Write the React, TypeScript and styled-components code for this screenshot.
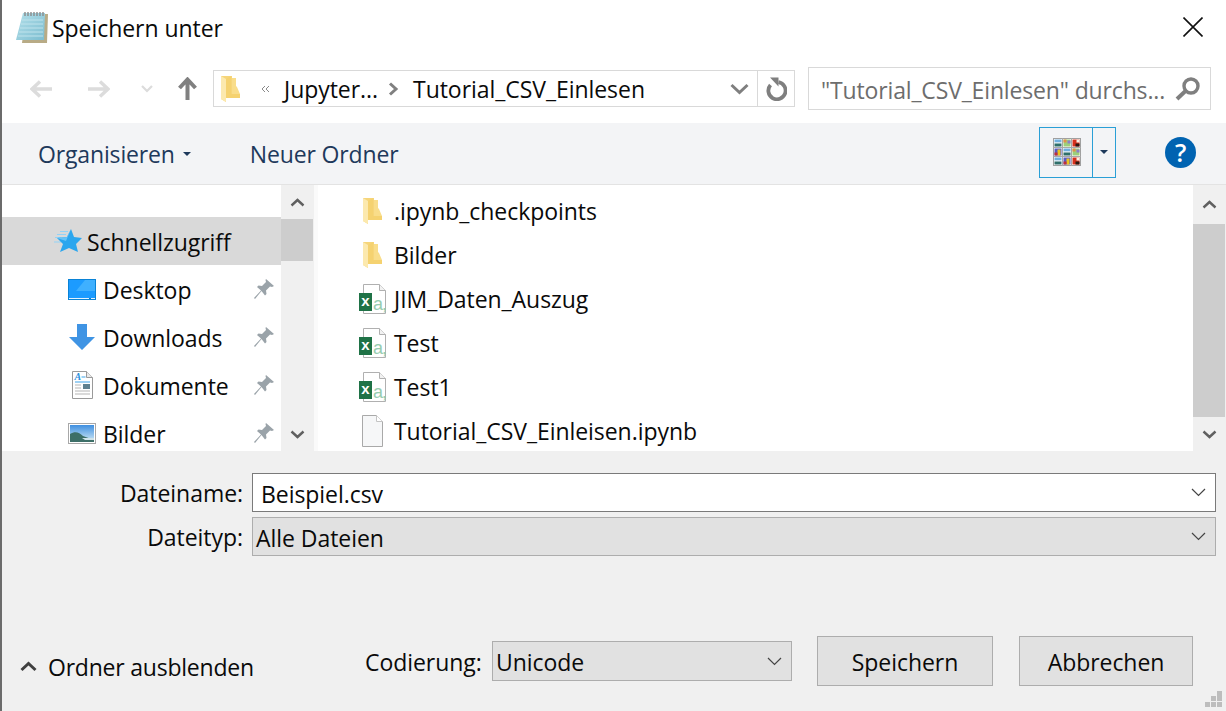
import React from 'react';
import styled, {createGlobalStyle} from 'styled-components';

const GlobalStyle = createGlobalStyle`
    html, body {
        margin: 0;
        padding: 0;
        background: #ffffff;
    }
    * {
        box-sizing: border-box;
    }
`;

const FONT = '"Open Sans", "Noto Sans", sans-serif';

const DialogDiv = styled.div`
    position: relative;
    width: 1226px;
    height: 711px;
    display: flex;
    flex-direction: column;
    overflow: hidden;
    border-left: 2px solid #6b6b6b;
    font-family: ${FONT};
    font-size: 23px;
    letter-spacing: -0.05px;
    color: #0a0a0a;
    background: #ffffff;
`;

const TitleBar = styled.div`
    height: 58px;
    flex: none;
    display: flex;
    align-items: center;
    padding: 0 23px 4px 14px;
`;

const TitleText = styled.span`
    flex: 1;
    margin-left: 4px;
    padding-top: 2px;
`;

const NavBar = styled.div`
    height: 65px;
    flex: none;
    display: flex;
    align-items: center;
    padding-left: 28px;
    padding-bottom: 4px;
`;

const NavButton = styled.div<{$width: number}>`
    width: ${(p) => p.$width}px;
    flex: none;
    display: flex;
    align-items: center;
`;

const AddressBox = styled.div`
    width: 582px;
    height: 37px;
    margin-left: 16px;
    flex: none;
    display: flex;
    align-items: center;
    border: 1px solid #d9d9d9;
    padding-left: 7px;
`;

const Crumb = styled.span<{$left: number}>`
    margin-left: ${(p) => p.$left}px;
    white-space: nowrap;
    display: flex;
    align-items: center;
`;

const AddressEnd = styled.div`
    margin-left: auto;
    display: flex;
    align-items: center;
    height: 100%;
`;

const RefreshCell = styled.div`
    width: 37px;
    height: 100%;
    margin-left: 8px;
    border-left: 1px solid #d9d9d9;
    display: flex;
    align-items: center;
    justify-content: center;
`;

const SearchBox = styled.div`
    width: 403px;
    height: 43px;
    margin-left: 13px;
    flex: none;
    display: flex;
    align-items: center;
    justify-content: space-between;
    border: 1px solid #d9d9d9;
    padding: 0 10px 0 12px;
    color: #6d6d6d;
`;

const SearchText = styled.span`
    padding-top: 2px;
    letter-spacing: -0.15px;
    white-space: nowrap;
`;

const ToolBar = styled.div`
    height: 62px;
    flex: none;
    display: flex;
    align-items: center;
    background: #f3f4f6;
    border-bottom: 1px solid #e3e3e3;
    padding: 0 30px 3px 36px;
    color: #1e395b;
    letter-spacing: -0.15px;
`;

const ToolItem = styled.div<{$left?: number}>`
    display: flex;
    align-items: center;
    gap: 8px;
    padding-top: 3px;
    margin-left: ${(p) => p.$left || 0}px;
`;

const ViewButton = styled.div`
    width: 77px;
    height: 51px;
    margin-left: auto;
    display: flex;
    border: 1px solid #2a9fd6;
`;

const ViewMain = styled.div`
    width: 53px;
    display: flex;
    align-items: center;
    justify-content: center;
    padding-left: 2px;
    border-right: 1px solid #2a9fd6;
`;

const ViewArrow = styled.div`
    flex: 1;
    display: flex;
    align-items: center;
    justify-content: center;
`;

const HelpCircle = styled.div`
    width: 31px;
    height: 31px;
    margin-left: 49px;
    border-radius: 50%;
    background: #0063b1;
    color: #ffffff;
    font-size: 25px;
    font-weight: 600;
    line-height: 30px;
    text-align: center;
`;

const ContentArea = styled.div`
    height: 266px;
    flex: none;
    display: flex;
    background: #ffffff;
`;

const NavPane = styled.div`
    width: 279px;
    flex: none;
    overflow: hidden;
    padding-top: 32px;
`;

const NavRow = styled.div<{$selected?: boolean; $indent: number}>`
    height: 48px;
    flex: none;
    display: flex;
    align-items: center;
    padding-left: ${(p) => p.$indent}px;
    padding-right: 7px;
    background: ${(p) => (p.$selected ? '#d9d9d9' : 'transparent')};
`;

const NavIconSlot = styled.div<{$width: number}>`
    width: ${(p) => p.$width}px;
    flex: none;
    display: flex;
    align-items: center;
`;

const NavIconCenter = styled(NavIconSlot)`
    justify-content: center;
    padding-right: 7px;
`;

const NavLabel = styled.span`
    flex: 1;
    padding-top: 2px;
`;

const ScrollTrack = styled.div<{$width: number}>`
    width: ${(p) => p.$width}px;
    flex: none;
    display: flex;
    flex-direction: column;
    background: #f0f0f0;
`;

const ScrollArrow = styled.div<{$height: number}>`
    height: ${(p) => p.$height}px;
    flex: none;
    display: flex;
    align-items: center;
    justify-content: center;
    padding-right: 1px;
`;

const ScrollThumb = styled.div<{$height: number}>`
    height: ${(p) => p.$height}px;
    flex: none;
    margin-right: 1px;
    background: #cdcdcd;
`;

const ScrollGap = styled.div`
    flex: 1;
`;

const Splitter = styled.div`
    width: 4px;
    flex: none;
    background: #fafafa;
`;

const FileList = styled.div`
    flex: 1;
    padding-top: 4px;
    overflow: hidden;
`;

const FileRow = styled.div`
    height: 44px;
    display: flex;
    align-items: center;
`;

const FileIconSlot = styled.div`
    width: 76px;
    flex: none;
    display: flex;
    justify-content: center;
    padding: 0 8px 0 41px;
`;

const Footer = styled.div`
    flex: 1;
    display: flex;
    flex-direction: column;
    background: #f0f0f0;
    padding-top: 22px;
`;

const FieldGrid = styled.div`
    display: grid;
    grid-template-columns: 241px 964px;
    grid-auto-rows: 39px;
    column-gap: 9px;
    row-gap: 5px;
`;

const FieldLabel = styled.div`
    text-align: right;
    height: 39px;
    line-height: 41px;
`;

const ComboText = styled.span`
    padding-top: 2px;
`;

const ComboBox = styled.div<{$light?: boolean}>`
    height: 39px;
    display: flex;
    align-items: center;
    justify-content: space-between;
    padding: 0 9px 0 ${(p) => (p.$light ? 8 : 3)}px;
    background: ${(p) => (p.$light ? '#ffffff' : '#e1e1e1')};
    border: 1px solid ${(p) => (p.$light ? '#7a7a7a' : '#adadad')};
`;

const BottomRow = styled.div`
    display: flex;
    align-items: center;
    margin-top: 80px;
    height: 50px;
`;

const HideFolders = styled.div`
    width: 363px;
    flex: none;
    display: flex;
    align-items: center;
    gap: 11px;
    padding-left: 18px;
    padding-top: 11px;
    letter-spacing: -0.22px;
`;

const EncodingLabel = styled.span`
    width: 127px;
    flex: none;
    padding-top: 1px;
`;

const EncodingBox = styled(ComboBox)`
    width: 300px;
    height: 40px;
    flex: none;
`;

const ActionButton = styled.div<{$left: number; $width: number}>`
    width: ${(p) => p.$width}px;
    height: 50px;
    margin-left: ${(p) => p.$left}px;
    padding-top: 2px;
    flex: none;
    display: flex;
    align-items: center;
    justify-content: center;
    background: #e1e1e1;
    border: 1px solid #adadad;
`;

const ResizeGrip = styled.svg`
    position: absolute;
    right: 4px;
    bottom: 4px;
`;

const ExcelSvg = styled.svg`
    margin-right: -4px;
`;

const ChevronThin = () => (
    <svg width="15" height="9" viewBox="0 0 15 9">
        <path d="M1 1l6.5 6.5L14 1" fill="none" stroke="#444" strokeWidth="1.2" />
    </svg>
);

const ChevronBold = ({up}: {up?: boolean}) => (
    <svg width="15" height="9" viewBox="0 0 15 9">
        <path d={up ? 'M1.5 7.5l6-5.5 6 5.5' : 'M1.5 1.5l6 5.5 6-5.5'} fill="none" stroke="#606060" strokeWidth="2.4" />
    </svg>
);

const HideChevron = () => (
    <svg width="17" height="11" viewBox="0 0 17 11">
        <path d="M1.500 9L8.500 2.500 15.500 9" fill="none" stroke="#404040" strokeWidth="3" />
    </svg>
);

const Arrow = ({flip}: {flip?: boolean}) => (
    <svg width="22" height="18" viewBox="0 0 22 18" style={flip ? {transform: 'scaleX(-1)'} : undefined}>
        <path d="M10 1.5L2 9l8 7.5M2.5 9H22" fill="none" stroke="#dcdcdc" strokeWidth="3.4" />
    </svg>
);

const UpArrow = () => (
    <svg width="19" height="23" viewBox="0 0 19 23">
        <path d="M9.5 23V3M1.5 11L9.5 2.5l8 8.5" fill="none" stroke="#808080" strokeWidth="4" />
    </svg>
);

const Folder = () => (
    <svg width="19" height="26" viewBox="0 0 19 26">
        <path d="M0 0h11v18h8v4H5v4L0 23z" fill="#f6d57a" />
        <path d="M11 2v16h8l-3-7-1-1V2z" fill="#f9dd8a" />
        <path d="M0 0l5 3v23L0 23z" fill="#fce9ae" />
        <path d="M5 3l5-3v18h9v4H5z" fill="#f5d270" />
    </svg>
);

const NotepadIcon = () => (
    <svg width="32" height="33" viewBox="0 0 32 33">
        <defs>
            <linearGradient id="padFill" x1="0" y1="0" x2="1" y2="1">
                <stop offset="0" stopColor="#b4e0ea" />
                <stop offset="1" stopColor="#7cbdd0" />
            </linearGradient>
        </defs>
        <path d="M10 3h22l-1 29H6z" fill="#b8ab86" />
        <path d="M7 2h22l-1 27H0z" fill="url(#padFill)" />
        <path d="M6 9h21M5 13h22M4 17h23M3 21h24M2 25h25" stroke="#bfe3ec" strokeWidth="1" />
        <path d="M9 1v4M12 1v4M15 1v4M18 1v4M21 1v4M24 1v4M27 1v4" stroke="#8a8a8a" strokeWidth="1.4" />
    </svg>
);

const CloseIcon = () => (
    <svg width="20" height="20" viewBox="0 0 20 20">
        <path d="M0.5 0.5l19 19M19.5 0.5l-19 19" stroke="#111" strokeWidth="1.6" />
    </svg>
);

const RefreshIcon = () => (
    <svg width="22" height="24" viewBox="0 0 22 24">
        <path d="M5.500 8a8.600 8.600 0 1 0 8-2.800" fill="none" stroke="#7f7f7f" strokeWidth="3.8" />
        <path d="M5 0.500h8.500v9z" fill="#7f7f7f" />
    </svg>
);

const SearchIcon = () => (
    <svg width="25" height="24" viewBox="0 0 25 24">
        <circle cx="16" cy="9" r="7" fill="none" stroke="#7f7f7f" strokeWidth="3.4" />
        <path d="M10.5 14L2 22" stroke="#7f7f7f" strokeWidth="4" />
    </svg>
);

const SmallCaret = ({color}: {color: string}) => (
    <svg width="8" height="4" viewBox="0 0 8 4">
        <path d="M0 0h8L4 4z" fill={color} />
    </svg>
);

// tiny pictures inside the thumbnail view icon
const Tile = ({kind, x, y}: {kind: number; x: number; y: number}) => {
    if (kind === 0) {
        return (
            <g transform={`translate(${x} ${y})`}>
                <rect width="7" height="3" fill="#6fb0e0" />
                <rect y="3" width="7" height="1" fill="#dfeef5" />
                <rect y="4" width="7" height="3" fill="#2f6f6a" />
            </g>
        );
    }
    if (kind === 1) {
        return (
            <g transform={`translate(${x} ${y})`}>
                <rect width="7" height="7" fill="#9ccf7a" />
                <rect width="3" height="3" fill="#e2904a" />
                <rect x="4" y="1" width="3" height="3" fill="#8f7fc8" />
            </g>
        );
    }
    if (kind === 2) {
        return (
            <g transform={`translate(${x} ${y})`}>
                <rect width="7" height="7" fill="#d6301c" />
                <rect x="4" y="0" width="3" height="3" fill="#f6f1e6" />
                <rect x="3" y="4" width="4" height="3" fill="#2a1a14" />
            </g>
        );
    }
    return (
        <g transform={`translate(${x} ${y})`}>
            <rect width="7" height="7" fill="#5a5ac0" />
            <rect x="3" y="1" width="3" height="6" fill="#eac51f" />
            <rect y="4" width="3" height="3" fill="#c0303a" />
        </g>
    );
};

const viewTiles = [0, 1, 2, 3, 0, 1, 0, 3, 2];

const ViewIcon = () => (
    <svg width="28" height="28" viewBox="0 0 28 28">
        <rect x="0.5" y="0.5" width="27" height="27" fill="#fff" stroke="#a0a0a0" />
        {viewTiles.map((tile, i) => (
            <Tile key={i} kind={tile} x={1.5 + (i % 3) * 9} y={1.5 + Math.floor(i / 3) * 9} />
        ))}
        <path d="M9.500 0v28M18.500 0v28M0 9.500h28M0 18.500h28" stroke="#a8a8a8" strokeWidth="1" />
    </svg>
);

const StarIcon = () => (
    <svg width="28" height="24" viewBox="0 0 28 24">
        <path d="M6 2.500h8M3 5.500h9M1 8.500h6M0 13h7" stroke="#93d3f6" strokeWidth="1" />
        <path d="M17 0l3 8 8 1-6 6 2 8-9-4-9 4 3-8-6-6 10-1z" fill="#2ba6ee" />
        <path d="M17 0l-4 8-10 1 9 3z" fill="#66c3f6" />
    </svg>
);

const DesktopIcon = () => (
    <svg width="28" height="21" viewBox="0 0 28 21">
        <rect width="28" height="21" fill="#0a83d6" />
        <rect x="1" y="1" width="26" height="18" fill="#1c9bff" />
        <path d="M17 1h10v11H8z" fill="#3fb0ff" />
        <path d="M1 19.500h20M23 19.500h4" stroke="#e6f4ff" strokeWidth="1" />
    </svg>
);

const DownloadIcon = () => (
    <svg width="26" height="26" viewBox="0 0 26 26">
        <path d="M8 0h10v13h8L13 26 0 13h8z" fill="#3f94e4" />
    </svg>
);

const DocumentIcon = () => (
    <svg width="21" height="28" viewBox="0 0 21 28">
        <path d="M.5.5h14l6 6v21H.5z" fill="#fff" stroke="#9a9a9a" />
        <path d="M14.500.5v6h6" fill="#e8e8e8" stroke="#9a9a9a" />
        <text x="2.500" y="9" fontFamily="Liberation Serif, serif" fontStyle="italic" fontWeight="700" fontSize="10" fill="#2b8fdc">A</text>
        <path d="M9.500 6h4M3 11h15" stroke="#3fa3e8" strokeWidth="1" />
        <rect x="11" y="13" width="7" height="5" fill="#5f8190" />
        <path d="M3 14h6M3 17h6M3 20h15M3 23h15" stroke="#b5b5b5" strokeWidth="1" />
    </svg>
);

const PictureIcon = () => (
    <svg width="28" height="21" viewBox="0 0 28 21">
        <defs>
            <linearGradient id="sky" x1="0" y1="0" x2="0" y2="1">
                <stop offset="0" stopColor="#3f8fe0" />
                <stop offset="1" stopColor="#d5ecf7" />
            </linearGradient>
        </defs>
        <rect x=".5" y=".5" width="27" height="20" fill="#fff" stroke="#a8a8a8" />
        <rect x="2" y="2" width="24" height="17" fill="url(#sky)" />
        <path d="M2 11c5-3 9-2 13 2l11 4v2H2z" fill="#3d6f68" />
        <path d="M14 15h12v2H17z" fill="#cfe3ea" />
    </svg>
);

const PinIcon = () => (
    <svg width="20" height="20" viewBox="0 0 20 20">
        <path d="M12 0l8 7-2 1-2-.500-4 4 .500 3.500-1.500 1.500-3.500-4.500L1 20l-1-1 7-7.500L3 8l1.500-1.500L8 7l4-4-.500-2z" fill="#9aa3a9" />
    </svg>
);

const ExcelIcon = () => (
    <ExcelSvg width="31" height="30" viewBox="0 0 31 30">
        <path d="M4.500.5h16l6 6v23h-22z" fill="#fff" stroke="#b0b0b0" />
        <path d="M20.500.5v6h6" fill="#f2f2f2" stroke="#b0b0b0" />
        <text x="14" y="26" fontFamily="Liberation Sans, sans-serif" fontSize="18" letterSpacing="-1" fill="#97cdb0">a,</text>
        <rect x="0" y="9" width="13" height="18" fill="#1f7246" />
        <text x="6.500" y="22" fontFamily="Liberation Sans, sans-serif" fontSize="15" fontWeight="700" fill="#fff" textAnchor="middle">x</text>
    </ExcelSvg>
);

const BlankFileIcon = () => (
    <svg width="21" height="32" viewBox="0 0 21 32">
        <path d="M.5.5h14l6 6v25H.5z" fill="#f6f7f8" stroke="#a9a9a9" />
        <path d="M14.500.5v6h6" fill="#fff" stroke="#c4c4c4" />
    </svg>
);

type NavEntry = {label: string; icon: React.ReactNode};

const navEntries: NavEntry[] = [
    {label: 'Desktop', icon: <DesktopIcon />},
    {label: 'Downloads', icon: <DownloadIcon />},
    {label: 'Dokumente', icon: <DocumentIcon />},
    {label: 'Bilder', icon: <PictureIcon />},
];

type FileEntry = {name: string; icon: React.ReactNode};

const files: FileEntry[] = [
    {name: '.ipynb_checkpoints', icon: <Folder />},
    {name: 'Bilder', icon: <Folder />},
    {name: 'JIM_Daten_Auszug', icon: <ExcelIcon />},
    {name: 'Test', icon: <ExcelIcon />},
    {name: 'Test1', icon: <ExcelIcon />},
    {name: 'Tutorial_CSV_Einleisen.ipynb', icon: <BlankFileIcon />},
];

const App = () => {
    return (
        <DialogDiv>
            <GlobalStyle />
            <TitleBar>
                <NotepadIcon />
                <TitleText>Speichern unter</TitleText>
                <CloseIcon />
            </TitleBar>
            <NavBar>
                <NavButton $width={58}><Arrow /></NavButton>
                <NavButton $width={53}><Arrow flip /></NavButton>
                <NavButton $width={37}>
                    <svg width="12" height="8" viewBox="0 0 12 8">
                        <path d="M1 1l5 5 5-5" fill="none" stroke="#dcdcdc" strokeWidth="2.2" />
                    </svg>
                </NavButton>
                <UpArrow />
                <AddressBox>
                    <Folder />
                    <Crumb $left={21}>
                        <svg width="9" height="8" viewBox="0 0 9 8">
                            <path d="M4 1L1 4l3 3M8 1L5 4l3 3" fill="none" stroke="#8a8a8a" strokeWidth="1" />
                        </svg>
                    </Crumb>
                    <Crumb $left={14}>Jupyter...</Crumb>
                    <Crumb $left={10}>
                        <svg width="11" height="14" viewBox="0 0 11 14">
                            <path d="M2 1.500L8 7l-6 5.500" fill="none" stroke="#808080" strokeWidth="3" />
                        </svg>
                    </Crumb>
                    <Crumb $left={14}>Tutorial_CSV_Einlesen</Crumb>
                    <AddressEnd>
                        <svg width="19" height="12" viewBox="0 0 19 12">
                            <path d="M1.500 2l8 7.500 8-7.500" fill="none" stroke="#7f7f7f" strokeWidth="3" />
                        </svg>
                        <RefreshCell><RefreshIcon /></RefreshCell>
                    </AddressEnd>
                </AddressBox>
                <SearchBox>
                    <SearchText>"Tutorial_CSV_Einlesen" durchs...</SearchText>
                    <SearchIcon />
                </SearchBox>
            </NavBar>
            <ToolBar>
                <ToolItem>
                    Organisieren
                    <SmallCaret color="#1e395b" />
                </ToolItem>
                <ToolItem $left={59}>Neuer Ordner</ToolItem>
                <ViewButton>
                    <ViewMain><ViewIcon /></ViewMain>
                    <ViewArrow><SmallCaret color="#1e395b" /></ViewArrow>
                </ViewButton>
                <HelpCircle>?</HelpCircle>
            </ToolBar>
            <ContentArea>
                <NavPane>
                    <NavRow $selected $indent={52}>
                        <NavIconSlot $width={33}><StarIcon /></NavIconSlot>
                        <NavLabel>Schnellzugriff</NavLabel>
                    </NavRow>
                    {navEntries.map((entry: NavEntry) => (
                        <NavRow key={entry.label} $indent={66}>
                            <NavIconCenter $width={35}>{entry.icon}</NavIconCenter>
                            <NavLabel>{entry.label}</NavLabel>
                            <PinIcon />
                        </NavRow>
                    ))}
                </NavPane>
                <ScrollTrack $width={33}>
                    <ScrollArrow $height={34}><ChevronBold up /></ScrollArrow>
                    <ScrollThumb $height={42} />
                    <ScrollGap />
                    <ScrollArrow $height={34}><ChevronBold /></ScrollArrow>
                </ScrollTrack>
                <Splitter />
                <FileList>
                    {files.map((file: FileEntry) => (
                        <FileRow key={file.name}>
                            <FileIconSlot>{file.icon}</FileIconSlot>
                            <span>{file.name}</span>
                        </FileRow>
                    ))}
                </FileList>
                <ScrollTrack $width={33}>
                    <ScrollArrow $height={39}><ChevronBold up /></ScrollArrow>
                    <ScrollThumb $height={193} />
                    <ScrollGap />
                    <ScrollArrow $height={34}><ChevronBold /></ScrollArrow>
                </ScrollTrack>
            </ContentArea>
            <Footer>
                <FieldGrid>
                    <FieldLabel>Dateiname:</FieldLabel>
                    <ComboBox $light>
                        <ComboText>Beispiel.csv</ComboText>
                        <ChevronThin />
                    </ComboBox>
                    <FieldLabel>Dateityp:</FieldLabel>
                    <ComboBox>
                        <ComboText>Alle Dateien</ComboText>
                        <ChevronThin />
                    </ComboBox>
                </FieldGrid>
                <BottomRow>
                    <HideFolders>
                        <HideChevron />
                        <span>Ordner ausblenden</span>
                    </HideFolders>
                    <EncodingLabel>Codierung:</EncodingLabel>
                    <EncodingBox>
                        <ComboText>Unicode</ComboText>
                        <ChevronThin />
                    </EncodingBox>
                    <ActionButton $left={25} $width={176}>Speichern</ActionButton>
                    <ActionButton $left={26} $width={174}>Abbrechen</ActionButton>
                </BottomRow>
            </Footer>
            <ResizeGrip width="17" height="16" viewBox="0 0 17 16">
                <path d="M12 0h5v5h-5zM6 5h5v5H6zM12 5h5v5h-5zM0 11h5v5H0zM6 11h5v5H6zM12 11h5v5h-5z" fill="#bdbdbd" />
            </ResizeGrip>
        </DialogDiv>
    );
};

export default App;
